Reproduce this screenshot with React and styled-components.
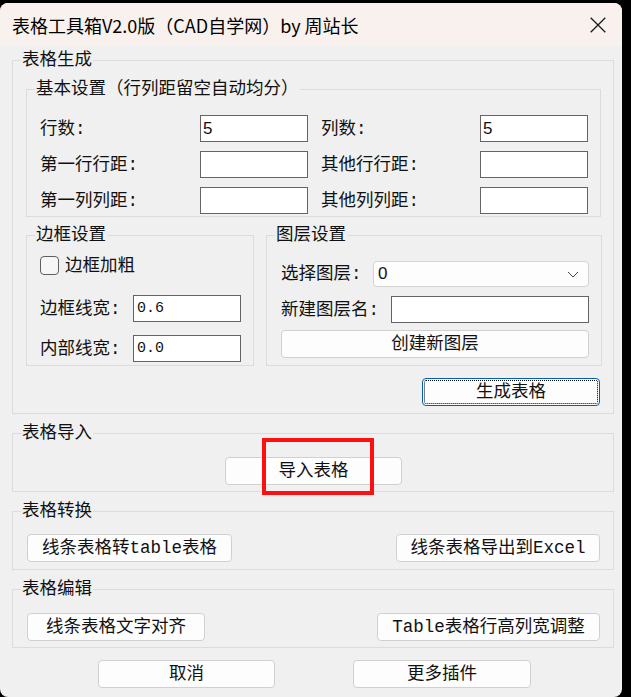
import React from 'react';
import styled, { createGlobalStyle } from 'styled-components';

const GlobalStyle = createGlobalStyle`
  html, body { margin: 0; padding: 0; background: #000; }
  body { font-family: "Noto Sans CJK SC", sans-serif; }
  * { box-sizing: border-box; }
`;

const CJK = `"Liberation Mono", "Noto Sans CJK SC", monospace`;

const Window = styled.div`
  margin-top: 3px;
  width: 622px;
  height: 694px;
  background: #f0f0f0;
  border-radius: 8px;
  overflow: hidden;
  display: flex;
  flex-direction: column;
`;

const TitleBar = styled.header`
  flex: none;
  height: 43px;
  background: #f9f1ed;
  display: flex;
  align-items: center;
  justify-content: space-between;
  padding-left: 12px;
`;

const Title = styled.h1`
  margin: 0;
  font: 400 18px/24px "Noto Sans CJK SC", sans-serif;
  color: #000;
`;

const CloseButton = styled.button`
  width: 48px;
  height: 43px;
  border: 0;
  padding: 0;
  background: transparent;
  display: flex;
  align-items: center;
  justify-content: center;
`;

const Body = styled.main`
  display: flex;
  flex-direction: column;
  padding: 14px 8px 0 12px;
`;

const Group = styled.section`
  position: relative;
  border: 1px solid #dcdcdc;
  display: flex;
  flex-direction: column;
  padding: ${(p) => p.$pad};
  margin-top: ${(p) => p.$mt || 0}px;
  width: ${(p) => (p.$w ? `${p.$w}px` : 'auto')};
`;

const GroupTitle = styled.span`
  position: absolute;
  top: -11px;
  left: 8px;
  padding: 0 1px;
  background: #f0f0f0;
  font: 400 17.5px/20px ${CJK};
  color: #111;
  white-space: nowrap;
`;

const Grid = styled.div`
  display: flex;
  flex-direction: column;
  gap: 9px;
`;

const Row = styled.div`
  display: flex;
  align-items: center;
  gap: ${(p) => p.$gap || 0}px;
`;

const Field = styled.div`
  display: flex;
  align-items: center;
  margin-top: ${(p) => p.$mt || 0}px;
`;

const Label = styled.label`
  width: ${(p) => p.$w}px;
  flex: none;
  font: 400 17.5px/20px ${CJK};
  color: #111;
  white-space: nowrap;
`;

const TextInput = styled.input`
  width: ${(p) => p.$w}px;
  height: 27px;
  flex: none;
  border: 1px solid #646464;
  background: #fff;
  padding: 0 0 0 ${(p) => (p.$mono ? 3 : 2)}px;
  margin: 0;
  outline: none;
  color: #111;
  font: ${(p) =>
    p.$mono ? `400 15px/25px "Liberation Mono", monospace` : `400 17px/25px "Liberation Sans", sans-serif`};
`;

const BoxesRow = styled.div`
  display: flex;
  gap: 12px;
  margin-top: 18px;
`;

const Column = styled.div`
  display: flex;
  flex-direction: column;
  gap: ${(p) => p.$gap || 0}px;
`;

const CheckRow = styled.label`
  height: 26px;
  display: flex;
  align-items: flex-start;
  gap: 6px;
  font: 400 17.5px/20px ${CJK};
  color: #111;
`;

const CheckBox = styled.span`
  width: 19px;
  height: 19px;
  border: 1px solid #5f5f5f;
  border-radius: 4px;
  background: #f6f6f6;
  flex: none;
`;

const Select = styled.div`
  width: 216px;
  height: 26px;
  border: 1px solid #d3d3d3;
  border-radius: 4px;
  background: #fdfdfd;
  display: flex;
  align-items: center;
  justify-content: space-between;
  padding: 0 9px 0 4px;
  font: 400 17px/20px "Liberation Sans", sans-serif;
  color: #111;
`;

const Button = styled.button`
  width: ${(p) => (p.$w ? `${p.$w}px` : '100%')};
  height: 28px;
  flex: none;
  margin: ${(p) => p.$margin || 0};
  padding: 0;
  border: 1px solid ${(p) => (p.$default ? '#005fb8' : '#d0d0d0')};
  border-radius: 4px;
  background: #fdfdfd;
  font: 400 17.5px/20px ${CJK};
  color: #111;
  align-self: ${(p) => p.$align || 'auto'};
  outline: ${(p) => (p.$default ? '1px dotted #000' : 'none')};
  outline-offset: -3px;
`;

const Highlight = styled.div`
  position: absolute;
  left: 249px;
  top: 4px;
  width: 112px;
  height: 57px;
  border: 4px solid #fc1010;
  pointer-events: none;
`;

const SpreadRow = styled.div`
  display: flex;
  justify-content: space-between;
  align-items: center;
`;

const Footer = styled.footer`
  display: flex;
  gap: 78px;
  margin-top: 12px;
  padding-left: 86px;
`;

export default function App() {
  return (
    <>
      <GlobalStyle />
      <Window>
        <TitleBar>
          <Title>表格工具箱V2.0版（CAD自学网）by 周站长</Title>
          <CloseButton aria-label="关闭">
            <svg width="16" height="16" viewBox="0 0 16 16">
              <path d="M0.7 0.7 L15.3 15.3 M15.3 0.7 L0.7 15.3" stroke="#1a1a1a" strokeWidth="1.3" fill="none" />
            </svg>
          </CloseButton>
        </TitleBar>
        <Body>
          <Group $pad="28px 12px 7px 13px">
            <GroupTitle>表格生成</GroupTitle>
            <Group $pad="25px 12px 2px 13px">
              <GroupTitle>基本设置（行列距留空自动均分）</GroupTitle>
              <Grid>
                <Row $gap={13}>
                  <Field>
                    <Label $w={160}>行数:</Label>
                    <TextInput $w={108} defaultValue="5" />
                  </Field>
                  <Field>
                    <Label $w={159}>列数:</Label>
                    <TextInput $w={108} defaultValue="5" />
                  </Field>
                </Row>
                <Row $gap={13}>
                  <Field>
                    <Label $w={160}>第一行行距:</Label>
                    <TextInput $w={108} />
                  </Field>
                  <Field>
                    <Label $w={159}>其他行行距:</Label>
                    <TextInput $w={108} />
                  </Field>
                </Row>
                <Row $gap={13}>
                  <Field>
                    <Label $w={160}>第一列列距:</Label>
                    <TextInput $w={108} />
                  </Field>
                  <Field>
                    <Label $w={159}>其他列列距:</Label>
                    <TextInput $w={108} />
                  </Field>
                </Row>
              </Grid>
            </Group>
            <BoxesRow>
              <Group $w={228} $pad="20px 12px 3px 13px">
                <GroupTitle>边框设置</GroupTitle>
                <Column $gap={13}>
                  <CheckRow>
                    <CheckBox />
                    边框加粗
                  </CheckRow>
                  <Field>
                    <Label $w={93}>边框线宽:</Label>
                    <TextInput $w={108} $mono defaultValue="0.6" />
                  </Field>
                  <Field>
                    <Label $w={93}>内部线宽:</Label>
                    <TextInput $w={108} $mono defaultValue="0.0" />
                  </Field>
                </Column>
              </Group>
              <Group $w={336} $pad="25px 12px 7px 14px">
                <GroupTitle>图层设置</GroupTitle>
                <Column>
                  <Field>
                    <Label $w={92}>选择图层:</Label>
                    <Select role="combobox">
                      <span>0</span>
                      <svg width="12" height="7" viewBox="0 0 12 7">
                        <path d="M1 1 L6 6 L11 1" stroke="#444" strokeWidth="1" fill="none" />
                      </svg>
                    </Select>
                  </Field>
                  <Field $mt={9}>
                    <Label $w={110}>新建图层名:</Label>
                    <TextInput $w={198} />
                  </Field>
                  <Button $margin="7px 0 0 0">创建新图层</Button>
                </Column>
              </Group>
            </BoxesRow>
            <Button $w={178} $default $align="flex-end" $margin="12px 1px 0 0">
              生成表格
            </Button>
          </Group>

          <Group $mt={19} $pad="23px 13px 6px 14px">
            <GroupTitle>表格导入</GroupTitle>
            <Button $w={177} $align="center">导入表格</Button>
            <Highlight />
          </Group>

          <Group $mt={19} $pad="22px 13px 7px 14px">
            <GroupTitle>表格转换</GroupTitle>
            <SpreadRow>
              <Button $w={205}>线条表格转table表格</Button>
              <Button $w={204}>线条表格导出到Excel</Button>
            </SpreadRow>
          </Group>

          <Group $mt={19} $pad="23px 13px 6px 14px">
            <GroupTitle>表格编辑</GroupTitle>
            <SpreadRow>
              <Button $w={178}>线条表格文字对齐</Button>
              <Button $w={223}>Table表格行高列宽调整</Button>
            </SpreadRow>
          </Group>

          <Footer>
            <Button $w={177}>取消</Button>
            <Button $w={178}>更多插件</Button>
          </Footer>
        </Body>
      </Window>
    </>
  );
}
